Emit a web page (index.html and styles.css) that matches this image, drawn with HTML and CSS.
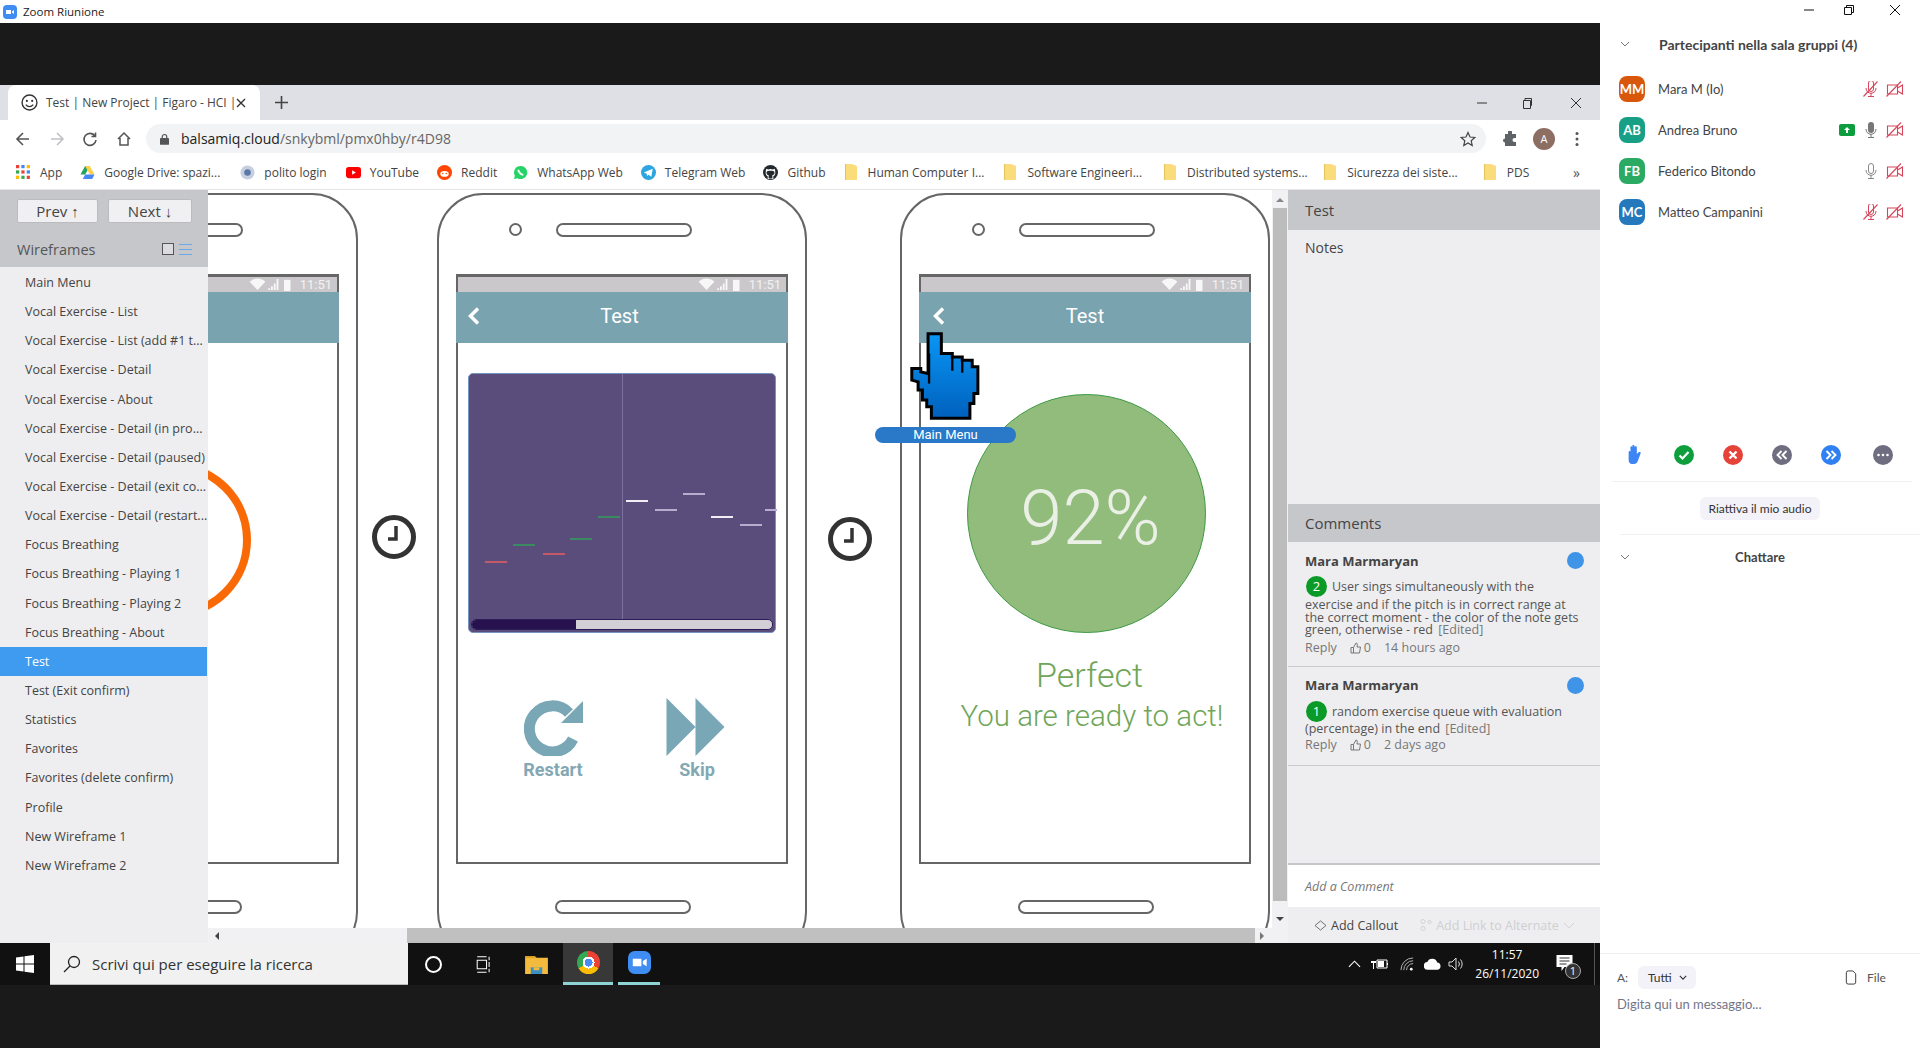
FILE: index.html
```html
<!DOCTYPE html>
<html lang="it">
<head>
  <meta charset="UTF-8">
  <title>Zoom Riunione</title>
  <link rel="stylesheet" href="styles.css">
</head>
<body>
  <svg class="defs" width="0" height="0">
    <defs>
      <symbol id="folder" viewBox="0 0 14 17"><path d="M1 0h7l5 2v14H1z" fill="#fbdc7a"/><path d="M1 0h1v16H1z" fill="#e3c25c"/></symbol>
      <symbol id="cam-off" viewBox="0 0 18 16"><path d="M1.500 4h10v9h-10zM11.500 7l5-3v9l-5-3" fill="none" stroke="#d6455a" stroke-width="1.100"/><path d="M0.500 15.500L15 0.500" stroke="#d6455a" stroke-width="1.100"/></symbol>
      <symbol id="mic-off" viewBox="0 0 16 16"><path d="M5.500 2a2.500 2.500 0 0 1 5 0v6a2.500 2.500 0 0 1-5 0z" fill="none" stroke="#d6455a" stroke-width="1"/><path d="M3 7c0 7 10 7 10 0M8 12v3M5 15.500h6" fill="none" stroke="#d6455a" stroke-width="1"/><path d="M0.500 15.500L14.500 0.500" stroke="#d6455a" stroke-width="1.100"/></symbol>
      <symbol id="status" viewBox="0 0 46 14"><path d="M0 4c5-4.500 12-4.500 17 0l-8.500 9z" fill="#fff" opacity=".85"/><path d="M20 13h2v-2h-2zM23 13h2v-4h-2zM26 13h2v-7h-2zM29 13h2V1h-2z" fill="#fff" opacity=".85"/><path d="M37 2h7v12h-7z" fill="#fff" opacity=".85"/></symbol>
    </defs>
  </svg>

  <div class="screen-share">
    <div class="title-bar">
      <svg class="zoom-mini" viewBox="0 0 14 14"><rect width="14" height="14" rx="4" fill="#3f8cf3"/><path d="M3 5h5v4H3zM9 6.500l2-1.500v4L9 7.500z" fill="#fff"/></svg>
      <span>Zoom Riunione</span>
    </div>
    <div class="band-top"></div>

    <div class="browser">
      <div class="tab-strip">
        <div class="tab">
          <svg class="favicon" viewBox="0 0 16 16"><circle cx="8" cy="8" r="7" fill="#fff" stroke="#333" stroke-width="1.300"/><circle cx="5.500" cy="6.500" r="1" fill="#333"/><circle cx="10.500" cy="6.500" r="1" fill="#333"/><path d="M4.500 10c2 2.500 5 2.500 7 0" fill="none" stroke="#333" stroke-width="1.200"/></svg>
          <span class="tab-title">Test | New Project | Figaro - HCI |</span>
          <svg class="tab-x" viewBox="0 0 10 10"><path d="M1 1l8 8M9 1l-8 8" stroke="#333" stroke-width="1.400"/></svg>
        </div>
        <svg class="tab-new" viewBox="0 0 12 12"><path d="M6 0v12M0 6h12" stroke="#444" stroke-width="1.500"/></svg>
        <div class="win-btns">
          <svg viewBox="0 0 12 12"><path d="M1 6h10" stroke="#333"/></svg>
          <svg viewBox="0 0 12 12"><path d="M2.500 3.500h7v8h-7zM4 3.500V1.500h6.500v7H9.500" fill="none" stroke="#333"/></svg>
          <svg viewBox="0 0 12 12"><path d="M1 1l10 10M11 1L1 11" stroke="#333"/></svg>
        </div>
      </div>

      <div class="toolbar">
        <div class="nav-btns">
          <svg viewBox="0 0 16 16"><path d="M14 8H2M8 2L2 8l6 6" fill="none" stroke="#555" stroke-width="1.600"/></svg>
          <svg viewBox="0 0 16 16"><path d="M2 8h12M8 2l6 6-6 6" fill="none" stroke="#c0c1c4" stroke-width="1.600"/></svg>
          <svg viewBox="0 0 16 16"><path d="M13 5a6 6 0 1 0 1 4M13.500 1.500v4h-4" fill="none" stroke="#555" stroke-width="1.600"/></svg>
          <svg viewBox="0 0 16 16"><path d="M2 8l6-6 6 6M4 7v7h8V7" fill="none" stroke="#555" stroke-width="1.500"/></svg>
        </div>
        <div class="omnibox">
          <svg class="lock" viewBox="0 0 10 13"><path d="M2.500 6V4a2.500 2.500 0 0 1 5 0v2" fill="none" stroke="#555" stroke-width="1.300"/><rect y="5.500" width="10" height="7.500" rx="1" fill="#555"/></svg>
          <span class="url"><b>balsamiq.cloud</b>/snkybml/pmx0hby/r4D98</span>
          <svg class="star" viewBox="0 0 16 16"><path d="M8 1.500l2 4.500 4.800.5-3.600 3.200 1 4.800L8 12l-4.200 2.500 1-4.800L1.200 6.500 6 6z" fill="none" stroke="#444" stroke-width="1.200"/></svg>
        </div>
        <svg class="puzzle" viewBox="0 0 16 16"><path d="M6 1a2 2 0 0 1 4 0v2h4v4h-1.500a2 2 0 0 0 0 4H14v4H3v-3.500a2 2 0 0 1 0-4V3h3z" fill="#5f6368"/></svg>
        <div class="avatar-a">A</div>
        <svg class="dots" viewBox="0 0 4 16"><circle cx="2" cy="2.500" r="1.500" fill="#555"/><circle cx="2" cy="8" r="1.500" fill="#555"/><circle cx="2" cy="13.500" r="1.500" fill="#555"/></svg>
      </div>

      <div class="bookmarks">
        <a class="bm bm-app"><svg viewBox="0 0 14 14"><path d="M0 0h3v3H0z" fill="#ea4335"/><path d="M5 0h3v3H5z" fill="#4285f4"/><path d="M10 0h3v3h-3z" fill="#fbbc05"/><path d="M0 5h3v3H0z" fill="#34a853"/><path d="M5 5h3v3H5z" fill="#ea4335"/><path d="M10 5h3v3h-3z" fill="#4285f4"/><path d="M0 10h3v3H0z" fill="#fbbc05"/><path d="M5 10h3v3H5z" fill="#34a853"/><path d="M10 10h3v3h-3z" fill="#ea4335"/></svg>App</a>
        <a class="bm bm-drive"><svg viewBox="0 0 16 14"><path d="M5.500 0h5l-5 9H.5z" fill="#1fa463"/><path d="M10.500 0L15.500 9h-5l-5-9z" fill="#ffd04b"/><path d="M3 14l2.500-5h10l-2.500 5z" fill="#4688f4"/></svg>Google Drive: spazi...</a>
        <a class="bm bm-polito"><svg viewBox="0 0 16 16"><circle cx="8" cy="8" r="7.500" fill="#c5cfe0"/><circle cx="8" cy="8" r="3.500" fill="#5a78a8"/></svg>polito login</a>
        <a class="bm bm-yt"><svg viewBox="0 0 16 12"><rect width="16" height="12" rx="3" fill="#f00"/><path d="M6.500 3.500l4 2.500-4 2.500z" fill="#fff"/></svg>YouTube</a>
        <a class="bm bm-reddit"><svg viewBox="0 0 16 16"><circle cx="8" cy="8" r="8" fill="#ff4500"/><ellipse cx="8" cy="9.500" rx="4.500" ry="3" fill="#fff"/><circle cx="6.200" cy="9" r=".8" fill="#ff4500"/><circle cx="9.800" cy="9" r=".8" fill="#ff4500"/></svg>Reddit</a>
        <a class="bm bm-wa"><svg viewBox="0 0 16 16"><path d="M8 1a7 7 0 0 0-6 10.500L1 15l3.600-1A7 7 0 1 0 8 1z" fill="#25d366"/><path d="M5.500 5c1 3.500 2.500 5 5.500 5.500" fill="none" stroke="#fff" stroke-width="2"/></svg>WhatsApp Web</a>
        <a class="bm bm-tg"><svg viewBox="0 0 16 16"><circle cx="8" cy="8" r="8" fill="#2ca5e0"/><path d="M3 8l9.500-4-1.500 8.500-3-2.200-1.500 1.500-.5-2.500z" fill="#fff"/></svg>Telegram Web</a>
        <a class="bm bm-gh"><svg viewBox="0 0 16 16"><circle cx="8" cy="8" r="8" fill="#24292e"/><path d="M5 15v-3c-2-1-2.500-2.500-2-5 0-1 0-2 .5-3l2 .8a8 8 0 0 1 5 0l2-.8c.5 1 .5 2 .5 3 .5 2.500 0 4-2 5v3z" fill="#fff"/><path d="M6 14.500v-3.500c-1.800-.5-2.500-1.500-2.200-3.500.2-1.800 8.200-1.800 8.400 0 .3 2-.4 3-2.200 3.500v3.500z" fill="#24292e"/></svg>Github</a>
        <a class="bm bm-folder bm-f1"><svg viewBox="0 0 14 17"><use href="#folder"/></svg>Human Computer I...</a>
        <a class="bm bm-folder bm-f2"><svg viewBox="0 0 14 17"><use href="#folder"/></svg>Software Engineeri...</a>
        <a class="bm bm-folder bm-f3"><svg viewBox="0 0 14 17"><use href="#folder"/></svg>Distributed systems...</a>
        <a class="bm bm-folder bm-f4"><svg viewBox="0 0 14 17"><use href="#folder"/></svg>Sicurezza dei siste...</a>
        <a class="bm bm-folder bm-f5"><svg viewBox="0 0 14 17"><use href="#folder"/></svg>PDS</a>
        <span class="bm-more">»</span>
      </div>

      <div class="app">
        <aside class="sidebar">
          <div class="side-head">
            <div class="side-btns">
              <button class="side-btn btn-prev">Prev ↑</button>
              <button class="side-btn btn-next">Next ↓</button>
            </div>
            <div class="side-title">
              <span>Wireframes</span>
              <i class="view-grid"></i>
              <svg class="view-list" viewBox="0 0 13 11"><path d="M0 .5h13M0 5.500h13M0 10.500h13" stroke="#6aa9ea" stroke-width="1.200"/></svg>
            </div>
          </div>
          <ul class="side-list">
            <li>Main Menu</li>
            <li>Vocal Exercise - List</li>
            <li>Vocal Exercise - List (add #1 t...</li>
            <li>Vocal Exercise - Detail</li>
            <li>Vocal Exercise - About</li>
            <li>Vocal Exercise - Detail (in pro...</li>
            <li>Vocal Exercise - Detail (paused)</li>
            <li>Vocal Exercise - Detail (exit co...</li>
            <li>Vocal Exercise - Detail (restart...</li>
            <li>Focus Breathing</li>
            <li>Focus Breathing - Playing 1</li>
            <li>Focus Breathing - Playing 2</li>
            <li>Focus Breathing - About</li>
            <li class="current">Test</li>
            <li>Test (Exit confirm)</li>
            <li>Statistics</li>
            <li>Favorites</li>
            <li>Favorites (delete confirm)</li>
            <li>Profile</li>
            <li>New Wireframe 1</li>
            <li>New Wireframe 2</li>
          </ul>
        </aside>

        <div class="stage">
          <div class="stage-row">
            <div class="canvas">
              <div class="phone phone-a">
                <div class="phone-top"><i class="camera"></i><i class="speaker"></i></div>
                <div class="screen">
                  <div class="status"><svg><use href="#status"/></svg><span>11:51</span></div>
                  <div class="app-head"></div>
                  <div class="ring"></div>
                </div>
                <i class="speaker home"></i>
              </div>

              <svg class="clock clock-a" viewBox="0 0 44 44"><circle cx="22" cy="22" r="19.500" fill="#fff" stroke="#333" stroke-width="5"/><path d="M24 11v13h-8" fill="none" stroke="#333" stroke-width="3.500"/></svg>

              <div class="phone phone-b">
                <div class="phone-top"><i class="camera"></i><i class="speaker"></i></div>
                <div class="screen">
                  <div class="status"><svg><use href="#status"/></svg><span>11:51</span></div>
                  <div class="app-head">
                    <svg class="back" viewBox="0 0 12 18"><path d="M10 1.500L2.500 9l7.500 7.500" fill="none" stroke="#fff" stroke-width="3.500"/></svg>
                    <span>Test</span>
                  </div>
                  <div class="chart">
                    <i class="playhead"></i>
                    <i class="note red" style="left:16px;top:187px"></i>
                    <i class="note green" style="left:44px;top:170px"></i>
                    <i class="note red" style="left:74px;top:179px"></i>
                    <i class="note green" style="left:101px;top:164px"></i>
                    <i class="note green" style="left:129px;top:142px"></i>
                    <i class="note white" style="left:157px;top:126px"></i>
                    <i class="note lav" style="left:186px;top:135px"></i>
                    <i class="note lav" style="left:214px;top:119px"></i>
                    <i class="note white" style="left:242px;top:142px"></i>
                    <i class="note lav" style="left:271px;top:150px"></i>
                    <i class="note lav" style="left:296px;top:135px;width:12px"></i>
                    <div class="progress"><div class="progress-fill"></div></div>
                  </div>
                  <div class="actions">
                    <div class="action">
                      <svg viewBox="0 0 59 58"><path d="M45 15A23 23 0 1 0 49 41" fill="none" stroke="#7aa7b5" stroke-width="11"/><path d="M59 3v22H37z" fill="#7aa7b5"/></svg>
                      <span>Restart</span>
                    </div>
                    <div class="action action-skip">
                      <svg viewBox="0 0 58 58"><path d="M0 0l29 29L0 58zM29 0l29 29-29 29z" fill="#7aa7b5"/></svg>
                      <span>Skip</span>
                    </div>
                  </div>
                </div>
                <i class="speaker home"></i>
              </div>

              <svg class="clock clock-b" viewBox="0 0 44 44"><circle cx="22" cy="22" r="19.500" fill="#fff" stroke="#333" stroke-width="5"/><path d="M24 11v13h-8" fill="none" stroke="#333" stroke-width="3.500"/></svg>

              <div class="phone phone-c">
                <div class="phone-top"><i class="camera"></i><i class="speaker"></i></div>
                <div class="screen">
                  <div class="status"><svg><use href="#status"/></svg><span>11:51</span></div>
                  <div class="app-head">
                    <svg class="back" viewBox="0 0 12 18"><path d="M10 1.500L2.500 9l7.500 7.500" fill="none" stroke="#fff" stroke-width="3.500"/></svg>
                    <span>Test</span>
                  </div>
                  <div class="score">92%</div>
                  <p class="perfect">Perfect</p>
                  <p class="ready">You are ready to act!</p>
                </div>
                <i class="speaker home"></i>
              </div>

              <svg class="hand" viewBox="-5 -5 210 265">
                <defs><linearGradient id="handfill" x1="0" y1="0" x2="0" y2="1"><stop offset="0" stop-color="#0a96f5"/><stop offset="1" stop-color="#0060bd"/></linearGradient></defs>
                <path d="M49 0H89V60H122V70H152V80H182V100H199V180H187V210H175V255H59V220H45V200H32V170H19V145L0 140V105H27V115L49 120Z" fill="url(#handfill)" stroke="#000" stroke-width="9" stroke-linejoin="miter"/>
                <path d="M52 60V150M122 70V112M152 80V118" fill="none" stroke="#000" stroke-width="7"/>
              </svg>
              <div class="hand-label">Main Menu</div>
            </div>
            <div class="v-scroll">
              <i class="arrow-up"></i>
              <div class="v-thumb"></div>
              <i class="arrow-down"></i>
            </div>
          </div>
          <div class="h-scroll">
            <i class="arrow-left"></i>
            <div class="h-thumb"></div>
            <i class="arrow-right"></i>
          </div>
        </div>

        <section class="pane">
          <div class="pane-head">Test</div>
          <div class="notes">Notes</div>
          <div class="pane-head comments-head">Comments</div>
          <div class="comment">
            <div class="comment-author">Mara Marmaryan<i class="dot"></i></div>
            <div class="comment-first"><span class="num">2</span>User sings simultaneously with the</div>
            <div class="comment-rest">exercise and if the pitch is in correct range at the correct moment - the color of the note gets green, otherwise - red <em>[Edited]</em></div>
            <div class="comment-meta"><span>Reply</span><span class="likes"><svg viewBox="0 0 12 12"><path d="M1 5.500h2.500V11H1zM3.500 5.500L6 1c1.500 0 1.500 1.500 1 4h3.500L9.500 11h-6" fill="none" stroke="#777"/></svg>0</span><span>14 hours ago</span></div>
          </div>
          <div class="comment">
            <div class="comment-author">Mara Marmaryan<i class="dot"></i></div>
            <div class="comment-first"><span class="num">1</span>random exercise queue with evaluation</div>
            <div class="comment-rest rest-open">(percentage) in the end <em>[Edited]</em></div>
            <div class="comment-meta"><span>Reply</span><span class="likes"><svg viewBox="0 0 12 12"><path d="M1 5.500h2.500V11H1zM3.500 5.500L6 1c1.500 0 1.500 1.500 1 4h3.500L9.500 11h-6" fill="none" stroke="#777"/></svg>0</span><span>2 days ago</span></div>
          </div>
          <div class="pane-fill"></div>
          <div class="add-comment">Add a Comment</div>
          <div class="pane-foot">
            <span class="callout"><svg viewBox="0 0 14 12"><path d="M1 6l6-5 6 5-6 5z" fill="none" stroke="#666"/></svg>Add Callout</span>
            <span class="alt-link"><svg viewBox="0 0 12 12"><circle cx="3" cy="2.500" r="2" fill="none" stroke="#d3d3d6"/><circle cx="3" cy="9.500" r="2" fill="none" stroke="#d3d3d6"/><circle cx="9.500" cy="3" r="1.500" fill="none" stroke="#d3d3d6"/></svg>Add Link to Alternate<svg class="alt-chev" viewBox="0 0 12 7"><path d="M1 1l5 5 5-5" fill="none" stroke="#d3d3d6"/></svg></span>
          </div>
        </section>
      </div>
    </div>

    <div class="taskbar">
      <svg class="win-logo" viewBox="0 0 18 18"><path d="M0 2.500l7.500-1v7H0zM8.500 1.300L18 0v8.500H8.500zM0 9.500h7.500v7l-7.500-1zM8.500 9.500H18V18l-9.500-1.300z" fill="#fff"/></svg>
      <div class="search">
        <svg viewBox="0 0 18 18"><circle cx="11" cy="7" r="5.500" fill="none" stroke="#222" stroke-width="1.300"/><path d="M7 11l-6 6" stroke="#222" stroke-width="1.300"/></svg>
        <span>Scrivi qui per eseguire la ricerca</span>
      </div>
      <i class="cortana"></i>
      <svg class="taskview" viewBox="0 0 18 20"><path d="M1 5h11v10H1zM1 1h11M1 19h11M15 1v4M15 7v6M15 15v4" fill="none" stroke="#fff" stroke-width="1.200"/></svg>
      <svg class="explorer" viewBox="0 0 24 20"><path d="M0 1h10l2 2h12v17H0z" fill="#f2bb3d"/><path d="M0 1h10l2 2H0z" fill="#d89a1f"/><path d="M6 13h12v7H6z" fill="#3b8fc4"/><path d="M9 13h6v3H9z" fill="#f2bb3d"/></svg>
      <div class="task-item task-chrome"><i class="chrome"></i></div>
      <div class="task-item task-zoom">
        <svg viewBox="0 0 24 24"><rect width="24" height="24" rx="7" fill="#3f8cf3"/><path d="M5 8h9v8H5zM15.500 10.500l4-2.500v8l-4-2.500z" fill="#fff"/></svg>
      </div>
      <div class="tray">
        <svg class="tray-chev" viewBox="0 0 14 8"><path d="M1 7l6-6 6 6" fill="none" stroke="#fff" stroke-width="1.200"/></svg>
        <svg class="tray-bat" viewBox="0 0 18 14"><path d="M6 3h10v8H6zM16.500 6v2" fill="none" stroke="#fff"/><path d="M7 4h6v6H7zM1 1v3M4 1v3M0 4h5v2H0zM2 6h1v6H2z" fill="#fff"/></svg>
        <svg class="tray-wifi" viewBox="0 0 16 16"><path d="M1 14a13 13 0 0 1 13-13M4 14a10 10 0 0 1 10-10M7 14a7 7 0 0 1 7-7" fill="none" stroke="#bbb"/><circle cx="12" cy="13" r="1.500" fill="#fff"/></svg>
        <svg class="tray-cloud" viewBox="0 0 18 12"><path d="M4 12a4 4 0 0 1-.5-8A5.500 5.500 0 0 1 14 4.500 3.800 3.800 0 0 1 14.500 12z" fill="#fff"/></svg>
        <svg class="tray-vol" viewBox="0 0 16 14"><path d="M1 5h3l4-4v12l-4-4H1zM10.500 4.500a4 4 0 0 1 0 5M12.500 2.500a7 7 0 0 1 0 9" fill="none" stroke="#ddd"/></svg>
        <div class="clock-text"><span>11:57</span><span>26/11/2020</span></div>
        <div class="notif">
          <svg viewBox="0 0 16 18"><path d="M0 0h16v12H8l-3 4v-4H0z" fill="#fff"/><path d="M3 3h10M3 6h10M3 9h7" stroke="#333"/></svg>
          <span>1</span>
        </div>
        <i class="tray-edge"></i>
      </div>
    </div>
    <div class="band-bottom"></div>
  </div>

  <aside class="meeting">
    <div class="meeting-win">
      <svg viewBox="0 0 12 12"><path d="M1 6h10" stroke="#111"/></svg>
      <svg viewBox="0 0 12 12"><path d="M1.500 3.500h7v7h-7zM3.500 3.500v-2h7v7h-2" fill="none" stroke="#111"/></svg>
      <svg viewBox="0 0 12 12"><path d="M1 1l10 10M11 1L1 11" stroke="#111"/></svg>
    </div>
    <div class="people-head">
      <svg class="chev" viewBox="0 0 10 6"><path d="M1 1l4 4 4-4" fill="none" stroke="#777"/></svg>
      <b>Partecipanti nella sala gruppi (4)</b>
    </div>
    <ul class="people">
      <li><i class="badge b-mm">MM</i><span>Mara M (Io)</span><svg class="ico-mic"><use href="#mic-off"/></svg><svg class="ico-cam"><use href="#cam-off"/></svg></li>
      <li><i class="badge b-ab">AB</i><span>Andrea Bruno</span>
        <svg class="ico-share" viewBox="0 0 16 12"><rect width="16" height="12" rx="2" fill="#0d9c3e"/><path d="M8 3l3 3H9v3H7V6H5z" fill="#fff"/></svg>
        <svg class="ico-mic" viewBox="0 0 16 16"><rect x="5" y="0" width="6" height="11" rx="3" fill="#777"/><path d="M3 7c0 7 10 7 10 0M8 12v3M5 15.500h6" fill="none" stroke="#777"/></svg><svg class="ico-cam"><use href="#cam-off"/></svg></li>
      <li><i class="badge b-fb">FB</i><span>Federico Bitondo</span>
        <svg class="ico-mic" viewBox="0 0 16 16"><rect x="5.500" y=".5" width="5" height="10" rx="2.500" fill="none" stroke="#888"/><path d="M3 7c0 7 10 7 10 0M8 12v3M5 15.500h6" fill="none" stroke="#888"/></svg><svg class="ico-cam"><use href="#cam-off"/></svg></li>
      <li><i class="badge b-mc">MC</i><span>Matteo Campanini</span><svg class="ico-mic"><use href="#mic-off"/></svg><svg class="ico-cam"><use href="#cam-off"/></svg></li>
    </ul>
    <div class="reactions">
      <svg viewBox="0 0 20 22"><path d="M3 8c0-2 2-2 2 0V3c0-2 2-2 2 0V1.500c0-2 2.500-2 2.500 0V3c0-2 2.500-2 2.500 0v7l2-2c1.500-1 3 0 2 1.500L13 18c-1 2-2 3-4 3H7c-3 0-4-2-4-5z" fill="#3d84f5"/></svg>
      <svg viewBox="0 0 20 20"><circle cx="10" cy="10" r="10" fill="#0e9f3c"/><path d="M5.500 10.500l3 3 6-6.500" fill="none" stroke="#fff" stroke-width="2.200"/></svg>
      <svg viewBox="0 0 20 20"><circle cx="10" cy="10" r="10" fill="#e5423a"/><path d="M6.500 6.500l7 7M13.500 6.500l-7 7" fill="none" stroke="#fff" stroke-width="2.400"/></svg>
      <svg viewBox="0 0 20 20"><circle cx="10" cy="10" r="10" fill="#6e6e80"/><path d="M9.500 6l-4 4 4 4M14.500 6l-4 4 4 4" fill="none" stroke="#fff" stroke-width="1.900"/></svg>
      <svg viewBox="0 0 20 20"><circle cx="10" cy="10" r="10" fill="#2f80f2"/><path d="M5.500 6l4 4-4 4M10.500 6l4 4-4 4" fill="none" stroke="#fff" stroke-width="1.900"/></svg>
      <svg class="react-more" viewBox="0 0 20 20"><circle cx="10" cy="10" r="10" fill="#6e6e80"/><circle cx="5.500" cy="10" r="1.300" fill="#fff"/><circle cx="10" cy="10" r="1.300" fill="#fff"/><circle cx="14.500" cy="10" r="1.300" fill="#fff"/></svg>
    </div>
    <div class="audio-row"><button class="unmute">Riattiva il mio audio</button></div>
    <div class="chat-head">
      <svg class="chev" viewBox="0 0 10 6"><path d="M1 1l4 4 4-4" fill="none" stroke="#777"/></svg>
      <b>Chattare</b>
    </div>
    <div class="chat-log"></div>
    <div class="chat-foot">
      <div class="chat-to">
        <span class="to-label">A:</span>
        <span class="to-pill">Tutti<svg viewBox="0 0 10 6"><path d="M1 1l4 4 4-4" fill="none" stroke="#333" stroke-width="1.400"/></svg></span>
        <span class="file"><svg viewBox="0 0 12 16"><path d="M1 3a2 2 0 0 1 2-2h5l3 3v9a2 2 0 0 1-2 2H3a2 2 0 0 1-2-2z" fill="none" stroke="#333"/></svg>File</span>
      </div>
      <div class="chat-input">Digita qui un messaggio...</div>
    </div>
  </aside>
</body>
</html>
```

FILE: styles.css
```css
* {
  box-sizing: border-box;
}

html, body {
  margin: 0;
  height: 100%;
}

body {
  display: flex;
  width: 1920px;
  height: 1048px;
  overflow: hidden;
  background-color: #fff;
  font-family: "Open Sans", "Noto Sans", sans-serif;
  color: #444;
}

i {
  display: block;
  font-style: normal;
}

svg {
  display: block;
  flex: none;
}

.defs {
  position: absolute;
}

.screen-share {
  width: 1600px;
  display: flex;
  flex-direction: column;
}

.title-bar {
  height: 23px;
  display: flex;
  align-items: center;
  gap: 6px;
  padding-left: 3px;
  font-size: 11.500px;
  color: #222;
}

.zoom-mini {
  width: 14px;
  height: 14px;
}

.band-top {
  height: 62px;
  background-color: #1a1a1a;
}

.band-bottom {
  height: 63px;
  background-color: #1a1a1a;
}

/* browser chrome */
.browser {
  height: 858px;
  display: flex;
  flex-direction: column;
}

.tab-strip {
  height: 35px;
  display: flex;
  align-items: flex-end;
  background-color: #dfe0e5;
  padding-left: 8px;
}

.tab {
  width: 252px;
  height: 35px;
  display: flex;
  align-items: center;
  background-color: #fff;
  border-radius: 8px 8px 0 0;
  padding-left: 13px;
}

.favicon {
  width: 17px;
  height: 17px;
}

.tab-title {
  margin-left: 8px;
  width: 180px;
  font-size: 12px;
  white-space: nowrap;
  color: #444;
}

.tab-x {
  width: 10px;
  height: 10px;
  margin-left: 10px;
}

.tab-new {
  width: 13px;
  height: 13px;
  margin: 0 0 11px 15px;
}

.win-btns {
  margin-left: auto;
  display: flex;
  gap: 35px;
  padding: 0 18px 11px 0;
}

.win-btns svg {
  width: 12px;
  height: 12px;
}

.win-btns svg:nth-child(2) {
  margin: 0 2px 0 -2px;
}

.toolbar {
  height: 37px;
  display: flex;
  align-items: center;
  background-color: #fff;
}

.nav-btns {
  width: 146px;
  display: flex;
  gap: 17.500px;
  padding-left: 15px;
}

.nav-btns svg {
  width: 16px;
  height: 16px;
}

.omnibox {
  width: 1340px;
  height: 29px;
  display: flex;
  align-items: center;
  background-color: #f1f3f4;
  border-radius: 15px;
  padding: 0 10px 0 14px;
}

.lock {
  width: 9px;
  height: 12px;
}

.url {
  margin-left: 12px;
  font-size: 14px;
  color: #666;
}

.url b {
  font-weight: 400;
  color: #222;
}

.star {
  width: 16px;
  height: 16px;
  margin-left: auto;
}

.puzzle {
  width: 16px;
  height: 16px;
  margin-left: 16px;
}

.avatar-a {
  width: 22px;
  height: 22px;
  margin-left: 15px;
  border-radius: 50%;
  background-color: #8d6e63;
  color: #fff;
  font-size: 11px;
  line-height: 22px;
  text-align: center;
}

.dots {
  width: 4px;
  height: 16px;
  margin-left: 20px;
}

.bookmarks {
  height: 33px;
  display: flex;
  align-items: center;
  padding-bottom: 2px;
  background-color: #fff;
  font-size: 12px;
  color: #444;
  box-shadow: inset 0 -1px 0 #e6e6e8;
}

.bm {
  display: flex;
  align-items: center;
  gap: 9px;
  white-space: nowrap;
}

.bm svg {
  width: 15px;
  height: 15px;
}

.bm-folder svg {
  width: 14px;
  height: 17px;
}

.bm-folder { gap: 10px; }

.bm-app { margin-left: 16px; }
.bm-drive { margin-left: 18px; }
.bm-polito { margin-left: 20px; }
.bm-yt { margin-left: 19px; }
.bm-reddit { margin-left: 18px; }
.bm-wa { margin-left: 16px; }
.bm-tg { margin-left: 18px; }
.bm-gh { margin-left: 18px; }
.bm-f1 { margin-left: 18px; }
.bm-f2 { margin-left: 19px; }
.bm-f3 { margin-left: 21px; }
.bm-f4 { margin-left: 15.500px; }
.bm-f5 { margin-left: 25px; }

.bm-more {
  margin-left: auto;
  padding-right: 20px;
  font-size: 14px;
  color: #555;
}

/* balsamiq app */
.app {
  flex: 1;
  min-height: 0;
  display: flex;
}

.sidebar {
  width: 208px;
  display: flex;
  flex-direction: column;
  background-color: #eeeef0;
}

.side-head {
  height: 77px;
  background-color: #c6c7cb;
  padding: 9px 16px 0 17px;
}

.side-btns {
  display: flex;
  gap: 10px;
}

.side-btn {
  height: 24px;
  padding: 0;
  border: 1px solid #bcbcc0;
  border-radius: 2px;
  background-color: #f0f0f2;
  font-family: inherit;
  font-size: 15px;
  color: #444;
}

.btn-prev { width: 81px; }
.btn-next { width: 84px; }

.side-title {
  display: flex;
  align-items: center;
  height: 24px;
  margin-top: 14px;
  font-size: 14.500px;
  color: #555;
}

.view-grid {
  width: 12px;
  height: 12px;
  margin-left: auto;
  border: 1px solid #555;
  background-color: #dcdcde;
}

.view-list {
  width: 13px;
  height: 11px;
  margin-left: 5px;
}

.side-list {
  list-style: none;
  margin: 0;
  padding: 1px 0 0;
  font-size: 12.500px;
  color: #444;
}

.side-list li {
  height: 29.150px;
  line-height: 29.150px;
  padding-left: 25px;
  white-space: nowrap;
}

.side-list .current {
  background-color: #3f9bef;
  color: #fff;
  margin-right: 1px;
}

.stage {
  flex: 1;
  min-width: 0;
  display: flex;
  flex-direction: column;
}

.stage-row {
  flex: 1;
  min-height: 0;
  display: flex;
}

.canvas {
  position: relative;
  flex: 1;
  overflow: hidden;
  background-color: #fff;
}

.phone {
  position: absolute;
  top: 3px;
  width: 370px;
  height: 765px;
  border: 2px solid #666;
  border-radius: 46px;
  background-color: #fff;
}

.phone-a { left: -220px; }
.phone-b { left: 229px; }
.phone-c { left: 692px; }

.phone-top {
  height: 79px;
  display: flex;
  align-items: center;
  padding: 0 0 10px 70px;
  gap: 34px;
}

.camera {
  width: 13px;
  height: 13px;
  border: 2px solid #666;
  border-radius: 50%;
}

.speaker {
  width: 136px;
  height: 14px;
  border: 2px solid #666;
  border-radius: 7px;
}

.home {
  margin: 36px 0 0 116px;
}

.screen {
  height: 590px;
  margin: 0 17px;
  border: 2px solid #666;
  border-top-width: 0;
  display: flex;
  flex-direction: column;
  background-color: #fff;
}

.status {
  height: 18px;
  margin: 0 -2px;
  border: 2px solid #666;
  border-width: 3px 2px 0;
  background-color: #cac8cb;
  display: flex;
  align-items: center;
  justify-content: flex-end;
  gap: 6px;
  padding-right: 5px;
  font-family: Roboto, sans-serif;
  font-size: 13px;
  color: #f2f2f2;
}

.status svg {
  width: 46px;
  height: 13px;
}

.app-head {
  position: relative;
  height: 51px;
  margin: 0 -2px;
  background-color: #7aa3b0;
  font-family: Roboto, sans-serif;
  font-size: 20px;
  line-height: 48px;
  text-align: center;
  color: #fff;
}

.phone-b .app-head {
  padding-right: 5px;
}

.back {
  position: absolute;
  left: 12px;
  top: 15px;
  width: 12px;
  height: 18px;
}

.phone-c .back {
  left: 14px;
}

.ring {
  width: 156px;
  height: 156px;
  margin: 119px auto 0;
  border: 8px solid #f96a06;
  border-radius: 50%;
}

.chart {
  position: relative;
  width: 308px;
  height: 260px;
  margin: 30px 0 0 10px;
  background-color: #5a4d7b;
  border: 1px solid #7793c0;
  border-radius: 5px;
}

.playhead {
  position: absolute;
  left: 153px;
  top: 0;
  bottom: 12px;
  width: 1px;
  background-color: #7c70a0;
}

.note {
  position: absolute;
  width: 22px;
  height: 2px;
}

.note.red { background-color: #c25a68; }
.note.green { background-color: #3c8a62; }
.note.white { background-color: #f0edf5; }
.note.lav { background-color: #b9adcf; }

.progress {
  position: absolute;
  left: 2px;
  right: 2px;
  bottom: 2px;
  height: 11px;
  background-color: #d2cfd6;
  border: 1px solid #2a1d5a;
  border-radius: 5px;
  overflow: hidden;
}

.progress-fill {
  width: 104px;
  height: 100%;
  background-color: #27124f;
}

.actions {
  display: flex;
  gap: 82px;
  margin: 65px 0 0 65px;
}

.action {
  width: 60px;
  display: flex;
  flex-direction: column;
  align-items: center;
  font-family: Roboto, sans-serif;
  font-size: 18px;
  font-weight: 700;
  color: #83a8b4;
}

.action svg {
  width: 59px;
  height: 58px;
  margin-bottom: 3px;
}

.action-skip span {
  margin-left: 4px;
}

.clock {
  position: absolute;
  width: 44px;
  height: 44px;
}

.clock-a { left: 164px; top: 325px; }
.clock-b { left: 620px; top: 327px; }

.score {
  width: 239px;
  height: 239px;
  margin: 51px 0 0 46px;
  padding-left: 8px;
  border: 1px solid #3f9a45;
  border-radius: 50%;
  background-color: #91bc7c;
  font-family: Roboto, sans-serif;
  font-size: 76px;
  font-weight: 300;
  line-height: 247px;
  text-align: center;
  color: #eaf0e6;
  overflow: hidden;
}

.perfect, .ready {
  margin: 0;
  font-family: Roboto, sans-serif;
  font-weight: 300;
  text-align: center;
  white-space: nowrap;
  color: #6fa659;
}

.perfect {
  margin: 22px 0 0 9px;
  font-size: 34px;
  line-height: 40px;
}

.ready {
  margin: 3px 0 0 14px;
  font-size: 29.500px;
  line-height: 36px;
}

.hand {
  position: absolute;
  left: 702px;
  top: 142px;
  width: 70px;
  height: 88px;
}

.hand-label {
  position: absolute;
  left: 667px;
  top: 237px;
  width: 141px;
  height: 16px;
  border-radius: 8px;
  background-color: #2a78c8;
  font-family: Roboto, sans-serif;
  font-size: 13px;
  line-height: 16px;
  text-align: center;
  color: #fff;
}

.v-scroll {
  width: 16px;
  padding: 0 1px;
  display: flex;
  flex-direction: column;
  align-items: center;
  background-color: #f1f1f3;
}

.v-thumb {
  flex: 1;
  width: 100%;
  margin: 6px 0 16px;
  background-color: #bcbcbc;
}

.arrow-up, .arrow-down, .arrow-left, .arrow-right {
  width: 0;
  height: 0;
  border: 4px solid transparent;
}

.arrow-up { border-bottom-color: #888; margin-top: 4px; }
.arrow-down { border-top-color: #444; margin-bottom: 3px; }

.h-scroll {
  height: 15px;
  display: flex;
  align-items: center;
  background-color: #f1f1f3;
}

.arrow-left { border-right-color: #444; margin-left: 3px; }
.arrow-right { border-left-color: #777; margin: 0 20px 0 5px; }

.h-thumb {
  height: 100%;
  width: 848px;
  margin-left: auto;
  background-color: #c0c0c0;
}

.pane {
  width: 312px;
  display: flex;
  flex-direction: column;
  background-color: #eeeef0;
}

.pane-head {
  height: 40px;
  padding-left: 17px;
  background-color: #c6c7cb;
  font-size: 15px;
  line-height: 40px;
  color: #444;
}

.notes {
  height: 274px;
  padding: 8px 0 0 17px;
  font-size: 14px;
  line-height: 20px;
}

.comments-head {
  height: 38px;
  line-height: 38px;
}

.comment {
  border-bottom: 1px solid #c9c9cc;
  padding: 10px 17px 10px 17px;
  font-size: 12.500px;
  color: #555;
}

.comment-author {
  display: flex;
  justify-content: space-between;
  align-items: center;
  height: 17px;
  font-size: 13px;
  font-weight: 700;
  color: #444;
}

.dot {
  width: 17px;
  height: 17px;
  margin-right: -1px;
  border-radius: 50%;
  background-color: #3f94e8;
}

.comment-first {
  display: flex;
  align-items: center;
  gap: 5px;
  height: 21px;
  margin-top: 7px;
  white-space: nowrap;
}

.num {
  width: 21px;
  height: 21px;
  margin-left: 1px;
  border-radius: 50%;
  background-color: #0a9a27;
  color: #fff;
  font-size: 13px;
  line-height: 21px;
  text-align: center;
}

.comment-rest {
  margin-top: 2px;
  line-height: 12.500px;
}

.comment-rest.rest-open {
  margin-top: 0;
  line-height: 14px;
}

.comment-rest em {
  font-style: normal;
  color: #777;
  margin-left: 2px;
}

.comment-meta {
  display: flex;
  align-items: center;
  gap: 13px;
  height: 16px;
  margin-top: 3px;
  color: #777;
}

.rest-open + .comment-meta {
  margin: 1px 0 2px;
}

.likes {
  display: flex;
  align-items: center;
  gap: 2px;
}

.likes svg {
  width: 12px;
  height: 12px;
}

.pane-fill {
  flex: 1;
}

.add-comment {
  height: 44px;
  padding: 13px 0 0 17px;
  border-top: 2px solid #c6c7cb;
  background-color: #fff;
  font-size: 12.500px;
  font-style: italic;
  color: #777;
}

.pane-foot {
  height: 36px;
  display: flex;
  align-items: center;
  gap: 22px;
  padding-left: 26px;
  font-size: 12.500px;
}

.callout, .alt-link {
  display: flex;
  align-items: center;
  gap: 4px;
}

.callout svg {
  width: 13px;
  height: 11px;
}

.alt-link {
  color: #cfcfd2;
  white-space: nowrap;
}

.alt-link svg {
  width: 12px;
  height: 12px;
}

.alt-link .alt-chev {
  height: 7px;
}

/* windows taskbar */
.taskbar {
  height: 42px;
  display: flex;
  align-items: center;
  background-color: #111;
  color: #fff;
}

.win-logo {
  width: 18px;
  height: 18px;
  margin-left: 16px;
}

.search {
  width: 358px;
  height: 42px;
  margin-left: 16px;
  display: flex;
  align-items: center;
  gap: 11px;
  padding-left: 13px;
  background-color: #f1f1f1;
  border-bottom: 1px solid #bbb;
  font-size: 15px;
  color: #333;
}

.search svg {
  width: 18px;
  height: 18px;
}

.cortana {
  width: 17px;
  height: 17px;
  margin-left: 17px;
  border: 2px solid #fff;
  border-radius: 50%;
}

.taskview {
  width: 18px;
  height: 17px;
  margin-left: 33px;
}

.explorer {
  width: 23px;
  height: 19px;
  margin-left: 32px;
}

.task-item {
  height: 42px;
  display: flex;
  align-items: center;
  justify-content: center;
  border-bottom: 3px solid #8fd4d4;
}

.task-chrome {
  width: 50px;
  margin-left: 15px;
  background-color: #383838;
}

.chrome {
  width: 23px;
  height: 23px;
  border-radius: 50%;
  background:
    radial-gradient(circle, #4a8bf5 0 4px, #fff 4px 6px, transparent 6px),
    conic-gradient(#ea4335 0 120deg, #fbbc05 120deg 240deg, #34a853 240deg);
  background-size: 100% 100%;
}

.task-zoom {
  width: 42px;
  margin-left: 5px;
}

.task-zoom svg {
  width: 23px;
  height: 23px;
}

.tray {
  margin-left: auto;
  display: flex;
  align-items: center;
  height: 42px;
  padding-right: 5px;
}

.tray-chev { width: 13px; height: 8px; }
.tray-bat { width: 18px; height: 14px; margin-left: 10px; }
.tray-wifi { width: 15px; height: 15px; margin-left: 11px; }
.tray-cloud { width: 17px; height: 12px; margin-left: 9px; }
.tray-vol { width: 16px; height: 14px; margin-left: 7px; }

.clock-text {
  display: flex;
  flex-direction: column;
  align-items: center;
  gap: 1px;
  margin-left: 11px;
  font-size: 12px;
  line-height: 18px;
}

.notif {
  position: relative;
  width: 18px;
  margin: 0 20px 0 17px;
}

.notif svg {
  width: 17px;
  height: 18px;
}

.notif span {
  position: absolute;
  left: 9px;
  top: 8px;
  width: 16px;
  height: 16px;
  border: 1px solid #aaa;
  border-radius: 50%;
  background-color: #333;
  font-size: 11px;
  line-height: 14px;
  text-align: center;
}

.tray-edge {
  width: 1px;
  height: 42px;
  background-color: #555;
}

/* zoom side panel */
.meeting {
  width: 320px;
  height: 1048px;
  display: flex;
  flex-direction: column;
  font-family: Lato, "Open Sans", sans-serif;
  color: #333;
}

.meeting-win {
  height: 20px;
  display: flex;
  justify-content: flex-end;
  align-items: center;
  gap: 34px;
  padding-right: 19px;
}

.meeting-win svg {
  width: 12px;
  height: 12px;
}

.meeting-win svg:first-child {
  margin-right: -6px;
}

.people-head {
  height: 48px;
  display: flex;
  align-items: center;
  padding-left: 20px;
  font-size: 14px;
  color: #444;
}

.chev {
  width: 10px;
  height: 6px;
}

.people-head b {
  margin-left: 29px;
}

.people {
  list-style: none;
  margin: 0;
  padding: 0 0 0 19px;
  font-size: 13px;
}

.people li {
  height: 41px;
  display: flex;
  align-items: center;
  padding-right: 16px;
}

.people li span {
  margin-left: 13px;
  margin-right: auto;
  color: #444;
}

.badge {
  width: 26px;
  height: 26px;
  border-radius: 8px;
  color: #fff;
  font-size: 13px;
  font-weight: 700;
  line-height: 26px;
  text-align: center;
}

.b-mm { background-color: #d9570b; }
.b-ab { background-color: #17a085; }
.b-fb { background-color: #2aaa62; }
.b-mc { background-color: #2479bd; }

.ico-mic {
  width: 16px;
  height: 16px;
  margin-right: 7px;
}

.ico-cam {
  width: 18px;
  height: 16px;
}

.ico-share {
  width: 16px;
  height: 12px;
  margin-right: 8px;
}

.reactions {
  height: 54px;
  margin: 196px 8px 0 12px;
  padding: 0 0 0 13px;
  display: flex;
  align-items: center;
  gap: 29px;
  border-bottom: 1px solid #f0f0f2;
}

.reactions svg {
  width: 20px;
  height: 20px;
}

.reactions .react-more {
  margin-left: 3px;
}

.audio-row {
  height: 53px;
  margin-left: 20px;
  display: flex;
  justify-content: center;
  align-items: center;
  padding-right: 20px;
  border-bottom: 1px solid #f0f0f2;
}

.unmute {
  width: 120px;
  height: 23px;
  padding: 0;
  border: 0;
  border-radius: 6px;
  background-color: #f2f2f8;
  font-family: inherit;
  font-size: 12px;
  color: #333;
}

.chat-head {
  position: relative;
  height: 43px;
  display: flex;
  align-items: center;
  justify-content: center;
  font-size: 13px;
  color: #444;
}

.chat-head .chev {
  position: absolute;
  left: 20px;
}

.chat-log {
  flex: 1;
}

.chat-foot {
  height: 95px;
  padding: 12px 0 0 17px;
  border-top: 1px solid #eeeef0;
  font-size: 12px;
}

.chat-to {
  display: flex;
  align-items: center;
}

.to-label {
  width: 21px;
  color: #555;
}

.to-pill {
  width: 58px;
  height: 23px;
  display: flex;
  align-items: center;
  gap: 7px;
  padding-left: 10px;
  border-radius: 6px;
  background-color: #f2f2f8;
}

.to-pill svg {
  width: 8px;
  height: 5px;
}

.file {
  display: flex;
  align-items: center;
  gap: 10px;
  margin-left: 149px;
  color: #555;
}

.file svg {
  width: 12px;
  height: 15px;
}

.chat-input {
  margin-top: 7px;
  color: #747487;
  font-size: 13px;
}
```
